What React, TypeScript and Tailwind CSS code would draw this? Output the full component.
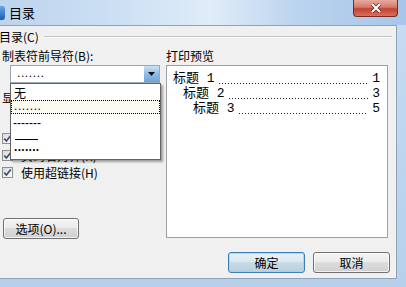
import React from "react";

function CheckBox({ checked = true }: { checked?: boolean }) {
  return (
    <span className="flex h-[11px] w-[11px] shrink-0 items-center justify-center border border-[#8f8f8f] bg-[linear-gradient(135deg,#d8d8d8,#ffffff)]">
      {checked && (
        <svg width="9" height="9" viewBox="0 0 9 9">
          <path d="M1.3 4.6 L3.4 7 L7.8 1.4" fill="none" stroke="#3b4b6e" strokeWidth="1.6" />
        </svg>
      )}
    </span>
  );
}

function Leader() {
  return (
    <div className="mx-[4px] mb-[2px] h-[1px] flex-1 bg-[linear-gradient(90deg,#222_1px,transparent_1px)] bg-[length:3px_1px] bg-repeat-x" />
  );
}

export default function App() {
  return (
    <div className="relative h-[287px] w-[406px] overflow-hidden bg-[linear-gradient(180deg,#c6dcf2,#b6d0eb)] font-['Noto_Sans_CJK_SC',sans-serif] text-[12px] text-black">
      {/* title bar */}
      <div className="flex h-[25px] bg-[linear-gradient(90deg,#bcd4ee_0%,#cde0f4_30%,#e0ecf8_52%,#bad3ee_74%,#a7c6e8_100%)]">
        <div className="mt-[6px] h-[14px] w-[5px] rounded-r-[3px] bg-[linear-gradient(180deg,#63a8e6,#1d5dae)]" />
        <span className="ml-[4px] mt-[5px] text-[13px] leading-[16px]">目录</span>
        <div className="ml-auto mr-[8px] flex h-[17px] w-[45px] items-center justify-center rounded-b-[4px] border border-t-0 border-[#7a2a22] bg-[linear-gradient(180deg,#e8aa9f_0%,#d67a6c_45%,#c4402f_55%,#d8705d_100%)]">
          <svg width="12" height="10" viewBox="0 0 12 10">
            <path d="M2 1 L10 9 M10 1 L2 9" stroke="#5a1d17" strokeWidth="3.4" />
            <path d="M2 1 L10 9 M10 1 L2 9" stroke="#ffffff" strokeWidth="2.2" />
          </svg>
        </div>
      </div>

      {/* dialog body */}
      <div className="flex h-[254px] w-[397px] flex-col border-y border-r border-[#8ea3ba] bg-[#f0f0f0]">
        {/* group header */}
        <div className="mt-[4px] flex h-[14px] items-center">
          <span className="-ml-[1px] leading-[14px]">目录(C)</span>
          <div className="ml-[5px] mr-[4px] h-[2px] flex-1 border-t border-b border-t-[#c4c4c4] border-b-white" />
        </div>

        <div className="flex">
          {/* left column */}
          <div className="flex w-[166px] flex-col pl-[2px]">
            <div className="mt-[5px] h-[14px] leading-[14px]">制表符前导符(B):</div>
            <div className="ml-[8px] mt-[2px] flex h-[18px] w-[150px] border border-[#9ba6b2] bg-white">
              <span className="flex-1 pl-[6px] font-['Liberation_Sans',sans-serif] text-[12px] leading-[14px] tracking-[0.6px]">.......</span>
              <div className="flex w-[15px] items-center justify-center bg-[linear-gradient(180deg,#c9e3f7,#8ebde6_50%,#6aa5d8)]">
                <svg width="7" height="4" viewBox="0 0 7 4">
                  <path d="M0 0 H7 L3.5 4 Z" fill="#111" />
                </svg>
              </div>
            </div>
            <div className="mt-[8px] h-[13px] leading-[13px]">显示级别(L):</div>
            <div className="ml-[8px] mt-[4px] h-[20px] w-[50px] border border-[#abadb3] bg-white" />
            <div className="mt-[2px] flex h-[17px] items-center gap-[8px]">
              <CheckBox />
              <span>显示页码(S)</span>
            </div>
            <div className="flex h-[17px] items-center gap-[8px]">
              <CheckBox />
              <span>页码右对齐(R)</span>
            </div>
            <div className="flex h-[17px] items-center gap-[8px]">
              <CheckBox />
              <span className="leading-[14px]">使用超链接(H)</span>
            </div>
            <button className="ml-[1px] mt-[37px] flex h-[21px] w-[76px] items-center justify-center rounded-[3px] border border-[#707070] bg-[linear-gradient(180deg,#f4f4f4_0%,#ebebeb_45%,#dddddd_50%,#cfcfcf_100%)] text-[12px] leading-[14px] shadow-[inset_0_0_0_1px_rgba(255,255,255,0.7)]">
              选项(O)...
            </button>
          </div>

          {/* right column */}
          <div className="flex flex-col">
            <div className="mt-[5px] h-[14px] leading-[14px]">打印预览</div>
            <div className="mt-[2px] h-[173px] w-[222px] border border-[#a0a0a0] bg-white pl-[6px] pr-[7px] pt-[5px] font-['Liberation_Mono','Noto_Sans_CJK_SC',monospace] text-[13px] leading-[15px]">
              <div className="flex h-[15px] items-end">
                <span className="whitespace-pre">标题 1</span>
                <Leader />
                <span>1</span>
              </div>
              <div className="flex h-[15px] items-end pl-[10px]">
                <span className="whitespace-pre">标题 2</span>
                <Leader />
                <span>3</span>
              </div>
              <div className="flex h-[15px] items-end pl-[20px]">
                <span className="whitespace-pre">标题 3</span>
                <Leader />
                <span>5</span>
              </div>
            </div>
          </div>
        </div>

        {/* dialog buttons */}
        <div className="mt-[13px] flex justify-end gap-[8px] pr-[6px]">
          <button className="flex h-[21px] w-[77px] items-center justify-center rounded-[3px] border border-[#3c7fb1] bg-[linear-gradient(180deg,#e9f3f8_0%,#dae9f1_45%,#c8dbe6_50%,#b9d0dd_100%)] text-[12px] leading-[14px] shadow-[inset_0_0_0_1px_rgba(140,220,240,0.8)]">
            确定
          </button>
          <button className="flex h-[21px] w-[77px] items-center justify-center rounded-[3px] border border-[#707070] bg-[linear-gradient(180deg,#f4f4f4_0%,#ebebeb_45%,#dddddd_50%,#cfcfcf_100%)] text-[12px] leading-[14px] shadow-[inset_0_0_0_1px_rgba(255,255,255,0.7)]">
            取消
          </button>
        </div>
      </div>

      {/* open dropdown list */}
      <div className="absolute left-[10px] top-[83px] flex h-[77px] w-[151px] flex-col border border-[#646464] bg-white pt-[2px] shadow-[2px_2px_2px_rgba(0,0,0,0.35)]">
        <div className="h-[14px] pl-[3px] leading-[13px]">无</div>
        <div className="h-[14px] border border-dotted border-black bg-[#fbfbf2] pl-[2px] font-['Liberation_Sans',sans-serif] leading-[11px] tracking-[0.6px]">
          .......
        </div>
        <div className="h-[14px] pl-[2px] font-['Liberation_Sans',sans-serif] leading-[18px]">-------</div>
        <div className="h-[14px] pl-[4px] pt-[11px]">
          <div className="h-[1px] w-[23px] bg-black" />
        </div>
        <div className="h-[14px] pl-[3px] font-['Liberation_Sans',sans-serif] font-bold leading-[11px] tracking-[0.3px]">.......</div>
      </div>
    </div>
  );
}
